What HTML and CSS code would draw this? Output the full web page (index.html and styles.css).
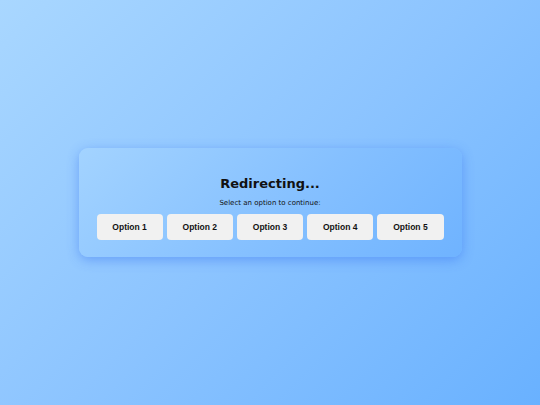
FILE: index.html
```html
<!DOCTYPE html>
<html>
<head>
<meta charset="utf-8">
<link rel="stylesheet" href="styles.css">
</head>
<body>
<div class="card">
  <h1 class="title">Redirecting...</h1>
  <p class="subtitle">Select an option to continue:</p>
  <div class="options">
    <button class="option">Option 1</button>
    <button class="option">Option 2</button>
    <button class="option">Option 3</button>
    <button class="option">Option 4</button>
    <button class="option">Option 5</button>
  </div>
</div>
</body>
</html>
```
FILE: styles.css
```css
html, body {
  margin: 0;
  height: 100%;
}
body {
  background: linear-gradient(135deg, #a9d7ff 0%, #8cc4ff 50%, #69b1ff 100%);
  display: flex;
  align-items: center;
  justify-content: center;
  font-family: "DejaVu Sans", Verdana, sans-serif;
}
.card {
  width: 347px;
  padding: 28px 18px 17px;
  border-radius: 9px;
  background: linear-gradient(135deg, #a3d3ff 0%, #85c0ff 55%, #6fb3ff 100%);
  box-shadow: 0 3px 12px rgba(50, 110, 240, 0.45);
  display: flex;
  flex-direction: column;
  align-items: center;
}
.title {
  margin: 0;
  font-size: 13px;
  line-height: 15px;
  font-weight: bold;
  color: #111;
}
.subtitle {
  margin: 8px 0 0;
  font-size: 7px;
  line-height: 8px;
  color: #111;
}
.options {
  margin-top: 7px;
  display: flex;
  gap: 4px;
  width: 100%;
}
.option {
  flex: 1;
  height: 26px;
  border: none;
  border-radius: 4px;
  background: #f1f1f1;
  font-family: "Liberation Sans", Arial, sans-serif;
  font-weight: bold;
  font-size: 8.5px;
  color: #111;
  padding: 0;
}
```
